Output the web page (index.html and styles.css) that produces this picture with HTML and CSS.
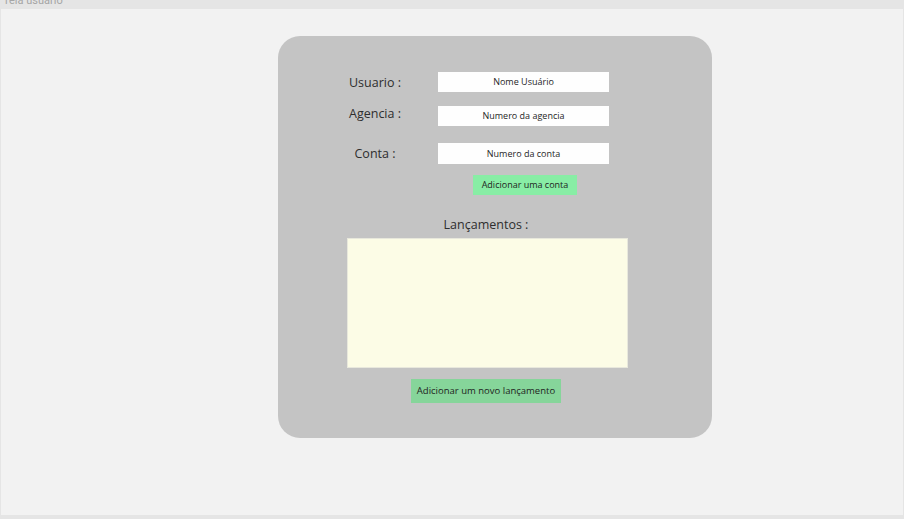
FILE: index.html
```html
<!DOCTYPE html>
<html lang="pt">
<head>
<meta charset="utf-8">
<title>Tela usuario</title>
<link rel="stylesheet" href="styles.css">
</head>
<body>
<div class="topbar"><span class="frame-title">Tela usuario</span></div>
<div class="frame">
  <div class="card">
    <div class="row row-usuario">
      <span class="label">Usuario :</span>
      <div class="field">Nome Usuário</div>
    </div>
    <div class="row row-agencia">
      <span class="label">Agencia :</span>
      <div class="field">Numero da agencia</div>
    </div>
    <div class="row row-conta">
      <span class="label">Conta :</span>
      <div class="field">Numero da conta</div>
    </div>
    <div class="btn btn-conta">Adicionar uma conta</div>
    <div class="lanc">
      <div class="lanc-title">Lançamentos :</div>
      <div class="lanc-box"></div>
      <div class="btn btn-lanc">Adicionar um novo lançamento</div>
    </div>
  </div>
</div>
</body>
</html>
```
FILE: styles.css
```css
html, body {
  margin: 0;
  padding: 0;
}
body {
  background: #e5e5e5;
  width: 904px;
  height: 519px;
  overflow: hidden;
  font-family: "Open Sans", "Noto Sans", sans-serif;
}
.topbar {
  height: 9px;
  position: relative;
  overflow: visible;
}
.frame-title {
  position: absolute;
  left: 3px;
  top: -6px;
  font-family: Roboto, "Liberation Sans", sans-serif;
  font-size: 11px;
  line-height: 13px;
  color: #a6a6a6;
}
.frame {
  margin-left: 1px;
  width: 902px;
  height: 506px;
  background: #f2f2f2;
  padding-top: 27px;
  box-sizing: border-box;
}
.card {
  margin-left: 277px;
  width: 434px;
  height: 402px;
  background: #c4c4c4;
  border-radius: 22px;
  padding-top: 36px;
  box-sizing: border-box;
  display: flex;
  flex-direction: column;
}
.row {
  display: flex;
  align-items: center;
  height: 20px;
  margin-left: 60px;
}
.row-agencia { margin-top: 14px; }
.row-conta { margin-top: 17px; }
.row-agencia .label { margin-top: -5px; }
.label {
  width: 74px;
  text-align: center;
  font-size: 12.5px;
  color: #2e2e2e;
  margin-right: 26px;
  white-space: nowrap;
}
.field {
  width: 171px;
  height: 20px;
  background: #fefefe;
  font-size: 9px;
  line-height: 20px;
  text-align: center;
  color: #1e1e1e;
}
.row-conta .field { height: 21px; line-height: 21px; }
.btn {
  text-align: center;
  color: #1e1e1e;
  white-space: nowrap;
}
.btn-conta {
  margin-top: 12px;
  margin-left: 195px;
  width: 104px;
  height: 20px;
  line-height: 20px;
  font-size: 9px;
  background: #88eda5;
}
.lanc {
  margin-left: 69px;
  width: 281px;
  display: flex;
  flex-direction: column;
  align-items: center;
  margin-top: 21px;
}
.lanc-title {
  font-size: 12.5px;
  line-height: 17px;
  color: #2e2e2e;
  margin-right: 3px;
}
.lanc-box {
  margin-top: 5px;
  width: 281px;
  height: 130px;
  background: #fcfce6;
  box-sizing: border-box;
  border: 1px solid #e8e8dc;
}
.btn-lanc {
  margin-top: 11px;
  width: 150px;
  height: 24px;
  line-height: 24px;
  font-size: 9.5px;
  background: #86d59a;
  margin-right: 3px;
}
```
